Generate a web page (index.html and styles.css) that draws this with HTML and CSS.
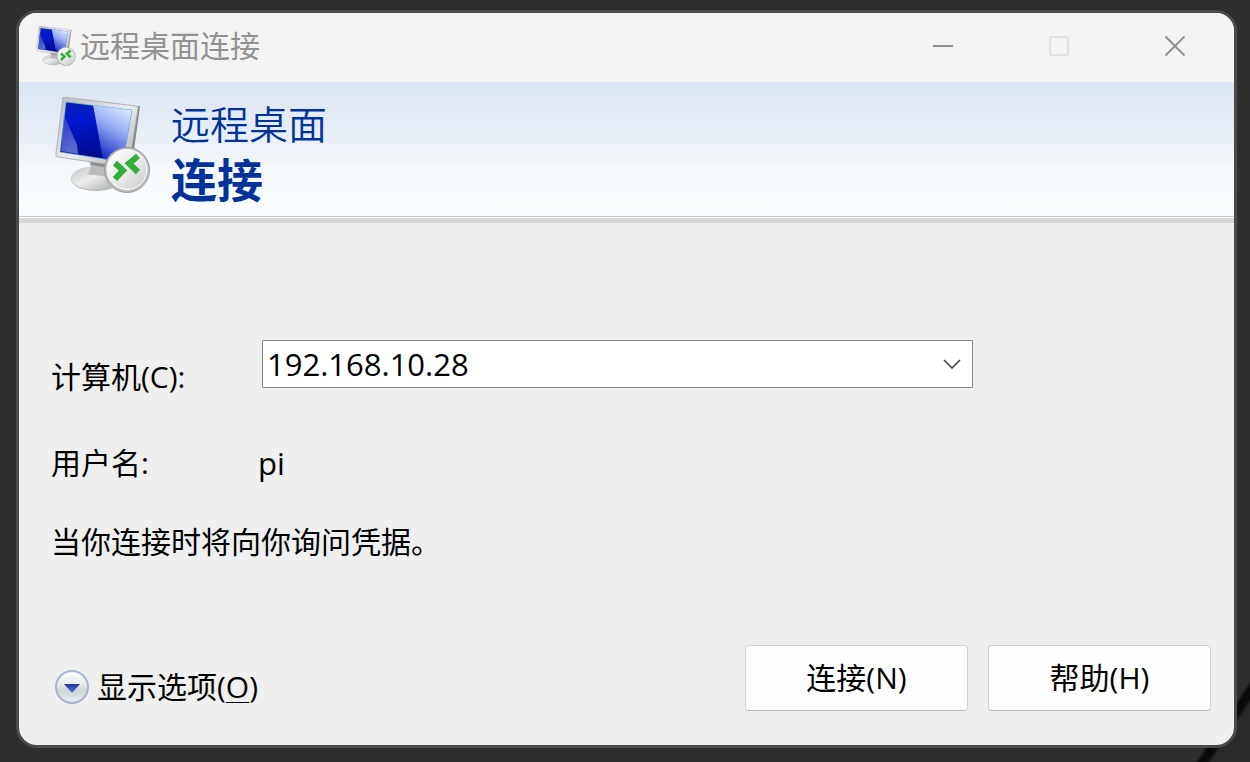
FILE: index.html
```html
<!DOCTYPE html>
<html lang="zh-CN">
<head>
    <meta charset="UTF-8">
    <meta name="viewport" content="width=device-width, initial-scale=1.0">
    <title>远程桌面连接</title>
    <link rel="stylesheet" href="styles.css">
</head>
<body>
    <!-- Shared artwork -->
    <svg class="defs" width="0" height="0" aria-hidden="true">
        <defs>
            <linearGradient id="frameFill" x1="0" y1="0" x2="1" y2="1">
                <stop offset="0" stop-color="#b5b7b9"/>
                <stop offset="0.5" stop-color="#eceded"/>
                <stop offset="1" stop-color="#a9abad"/>
            </linearGradient>
            <linearGradient id="screenFill" x1="0" y1="0" x2="0.3" y2="1">
                <stop offset="0" stop-color="#0a22a8"/>
                <stop offset="0.35" stop-color="#0018d2"/>
                <stop offset="1" stop-color="#000a86"/>
            </linearGradient>
            <linearGradient id="glareFill" x1="0.8" y1="0" x2="0.4" y2="1">
                <stop offset="0" stop-color="#e4edff"/>
                <stop offset="0.45" stop-color="#93a9f2"/>
                <stop offset="1" stop-color="#1228c4"/>
            </linearGradient>
            <linearGradient id="cornerFill" x1="0" y1="0" x2="0.3" y2="1">
                <stop offset="0" stop-color="#2338c8"/>
                <stop offset="1" stop-color="#5a68cc"/>
            </linearGradient>
            <linearGradient id="standFill" x1="0" y1="0" x2="1" y2="1">
                <stop offset="0" stop-color="#bfc1c2"/>
                <stop offset="0.45" stop-color="#ededed"/>
                <stop offset="1" stop-color="#a5a7a8"/>
            </linearGradient>
            <linearGradient id="badgeFill" x1="0" y1="0" x2="1" y2="1">
                <stop offset="0" stop-color="#ffffff"/>
                <stop offset="0.55" stop-color="#e9e9ea"/>
                <stop offset="1" stop-color="#c6c7c9"/>
            </linearGradient>
            <linearGradient id="knobFill" x1="0" y1="0" x2="0" y2="1">
                <stop offset="0" stop-color="#ffffff"/>
                <stop offset="0.42" stop-color="#e6eaea"/>
                <stop offset="0.6" stop-color="#cfd5d5"/>
                <stop offset="1" stop-color="#e8efee"/>
            </linearGradient>
            <linearGradient id="arrowFill" x1="0" y1="0" x2="0" y2="1">
                <stop offset="0" stop-color="#26378f"/>
                <stop offset="1" stop-color="#4f74ee"/>
            </linearGradient>
            <symbol id="rdp" viewBox="0 0 96 96">
                <ellipse cx="41" cy="82" rx="25" ry="12" fill="#b4b6b8"/>
                <ellipse cx="41" cy="81" rx="25" ry="12" fill="url(#standFill)"/>
                <path d="M34 64 L55 67 C53 75 56 78 60 81 L32 77 C37 73 36 69 34 64Z" fill="#b9bbbd"/>
                <path d="M35 64 L55 67 L54 71 L36 68Z" fill="#8c8f91"/>
                <path d="M77 10 L85 9 L77 68 L67 71Z" fill="#85888b"/>
                <path d="M8 0 L81 9 Q84 9 83 12 L74 68 Q73 71 70 70 L3 60 Q0 59 1 56Z" fill="url(#frameFill)" stroke="#a3a6a9" stroke-width="0.8"/>
                <path d="M11 5 L77 13 L68 65 L5 55Z" fill="url(#screenFill)"/>
                <path d="M38 8 L77 13 L68 65 L48 62Z" fill="url(#glareFill)"/>
                <path d="M9 18 L22 48 L23 57 L6 54Z" fill="url(#cornerFill)"/>
                <path d="M11 5 L77 13 L68 65 L5 55Z" fill="none" stroke="#78bde8" stroke-width="0.6"/>
                <circle cx="72" cy="73" r="22.5" fill="#babcbe" stroke="#9c9ea0"/>
                <circle cx="72" cy="72.5" r="20" fill="url(#badgeFill)" stroke="#fff"/>
                <path d="M60 66 L68 73.5 L60 82" fill="none" stroke="#2eb135" stroke-width="6"/>
                <path d="M83 59 L74 66.5 L83 75" fill="none" stroke="#2eb135" stroke-width="6"/>
            </symbol>
        </defs>
    </svg>

    <main class="window">
        <header class="titlebar">
            <svg class="app-icon" aria-hidden="true"><use href="#rdp"/></svg>
            <span class="title">远程桌面连接</span>
            <div class="window-controls">
                <button class="control" type="button" aria-label="最小化">
                    <svg width="22" height="22" viewBox="0 0 22 22"><path d="M1 11H21" stroke="#8f8f8f" stroke-width="2"/></svg>
                </button>
                <button class="control" type="button" aria-label="最大化" disabled>
                    <svg width="22" height="22" viewBox="0 0 22 22"><rect x="2" y="2" width="18" height="18" rx="1.5" fill="none" stroke="#e0e0e0" stroke-width="2"/></svg>
                </button>
                <button class="control" type="button" aria-label="关闭">
                    <svg width="22" height="22" viewBox="0 0 22 22"><path d="M1.5 1.5L20.5 20.5M20.5 1.5L1.5 20.5" stroke="#8f8f8f" stroke-width="1.8"/></svg>
                </button>
            </div>
        </header>

        <!-- Banner -->
        <section class="banner">
            <svg class="banner-icon" aria-hidden="true"><use href="#rdp"/></svg>
            <h1 class="banner-text">
                <span class="product">远程桌面</span>
                <span class="action">连接</span>
            </h1>
        </section>

        <!-- Connection form -->
        <form class="content">
            <div class="row computer">
                <label for="computer">计算机(C):</label>
                <div class="combo">
                    <select id="computer">
                        <option>192.168.10.28</option>
                    </select>
                    <svg class="chevron" width="18" height="10" viewBox="0 0 18 10" aria-hidden="true"><path d="M1 1L9 9L17 1" fill="none" stroke="#444" stroke-width="1.6"/></svg>
                </div>
            </div>
            <div class="row user">
                <span>用户名:</span>
                <span class="value">pi</span>
            </div>
            <p class="hint">当你连接时将向你询问凭据。</p>

            <div class="footer">
                <button class="options" type="button">
                    <svg width="36" height="36" viewBox="0 0 36 36" aria-hidden="true">
                        <circle cx="18" cy="18" r="16" fill="url(#knobFill)" stroke="#a9b0d6" stroke-width="2"/>
                        <path d="M10 15H26L18 24Z" fill="url(#arrowFill)"/>
                    </svg>
                    <span>显示选项(<u>O</u>)</span>
                </button>
                <div class="actions">
                    <button class="btn" type="button">连接(N)</button>
                    <button class="btn" type="button">帮助(H)</button>
                </div>
            </div>
        </form>
    </main>
</body>
</html>
```
FILE: styles.css
```css
* {
    box-sizing: border-box;
}

body {
    margin: 0;
    min-height: 100vh;
    padding: 10px 13px 14px 16px;
    display: flex;
    background: linear-gradient(124deg, transparent calc(100% - 46px), #080808 calc(100% - 42px), #0c0c0c calc(100% - 36px), #2a2a2a calc(100% - 32px)) #2e2e2e;
    font-family: "Open Sans", "Noto Sans CJK SC", sans-serif;
    font-size: 30px;
    line-height: 40px;
    color: #000;
}

button, select {
    font: inherit;
    color: inherit;
}

.defs {
    position: absolute;
}

.window {
    flex: 1;
    display: flex;
    flex-direction: column;
    border: 3px solid #4b4b4b;
    border-radius: 21px;
    background: #efefef;
    overflow: hidden;
}

/* Title bar */
.titlebar {
    display: flex;
    align-items: center;
    height: 69px;
    padding: 0 1px 4px 17px;
    background: #f3f3f3;
    color: #919191;
}

.app-icon {
    width: 40px;
    height: 40px;
    margin-right: 4px;
}

.title {
    font-weight: 400;
}

.window-controls {
    display: flex;
    margin-left: auto;
    height: 100%;
}

.control {
    display: flex;
    align-items: center;
    justify-content: center;
    width: 116px;
    padding: 0;
    border: none;
    background: none;
}

.control:hover {
    background: #e6e6e6;
}

/* Banner */
.banner {
    display: flex;
    align-items: flex-start;
    gap: 20px;
    height: 141px;
    padding: 15px 36px 0;
    background: linear-gradient(#dbe5f3, #e6edf6 35%, #f5f8fc 62%, #fafdfe 90%, #f8fbfd) #fff;
    border-bottom: 5px solid #d6d6d6;
    box-shadow: inset 0 -1px #fff, inset 0 -2px #c8c8ca;
}

.banner-icon {
    width: 96px;
    height: 96px;
}

.banner-text {
    display: flex;
    flex-direction: column;
    margin: 0;
    color: #003399;
}

.product {
    font-size: 39px;
    font-weight: 350;
    line-height: 54px;
}

.action {
    font-size: 46px;
    font-weight: 700;
    line-height: 56px;
}

/* Form */
.content {
    flex: 1;
    display: flex;
    flex-direction: column;
    padding: 117px 23px 34px 32px;
}

.row {
    display: grid;
    grid-template-columns: 207px minmax(0, 715px);
}

.computer label {
    padding-top: 17px;
}

.combo {
    display: grid;
    align-items: center;
    height: 48px;
    margin-left: 4px;
}

.combo select {
    grid-area: 1 / 1;
    width: 100%;
    height: 48px;
    padding: 0 4px;
    appearance: none;
    border: 1px solid #868686;
    border-radius: 1px;
    background: #fff;
    font-size: 31px;
}

.chevron {
    grid-area: 1 / 1;
    justify-self: end;
    margin-right: 12px;
    pointer-events: none;
}

.user {
    margin-top: 46px;
}

.value {
    font-size: 31px;
}

.hint {
    margin: 39px 0 0;
}

.footer {
    display: flex;
    align-items: flex-end;
    justify-content: space-between;
    margin-top: auto;
}

.options {
    display: flex;
    align-items: center;
    gap: 7px;
    height: 48px;
    padding: 0 3px;
    border: none;
    background: none;
}

.options u {
    text-decoration-thickness: 1px;
    text-underline-offset: 4px;
}

.actions {
    display: flex;
    gap: 20px;
}

.btn {
    width: 223px;
    height: 66px;
    padding: 0;
    border: 1px solid #d0d0d0;
    border-bottom-color: #bababa;
    border-radius: 4px;
    background: #fdfdfd;
}

.btn:hover {
    background: #e5f1fb;
}
```
